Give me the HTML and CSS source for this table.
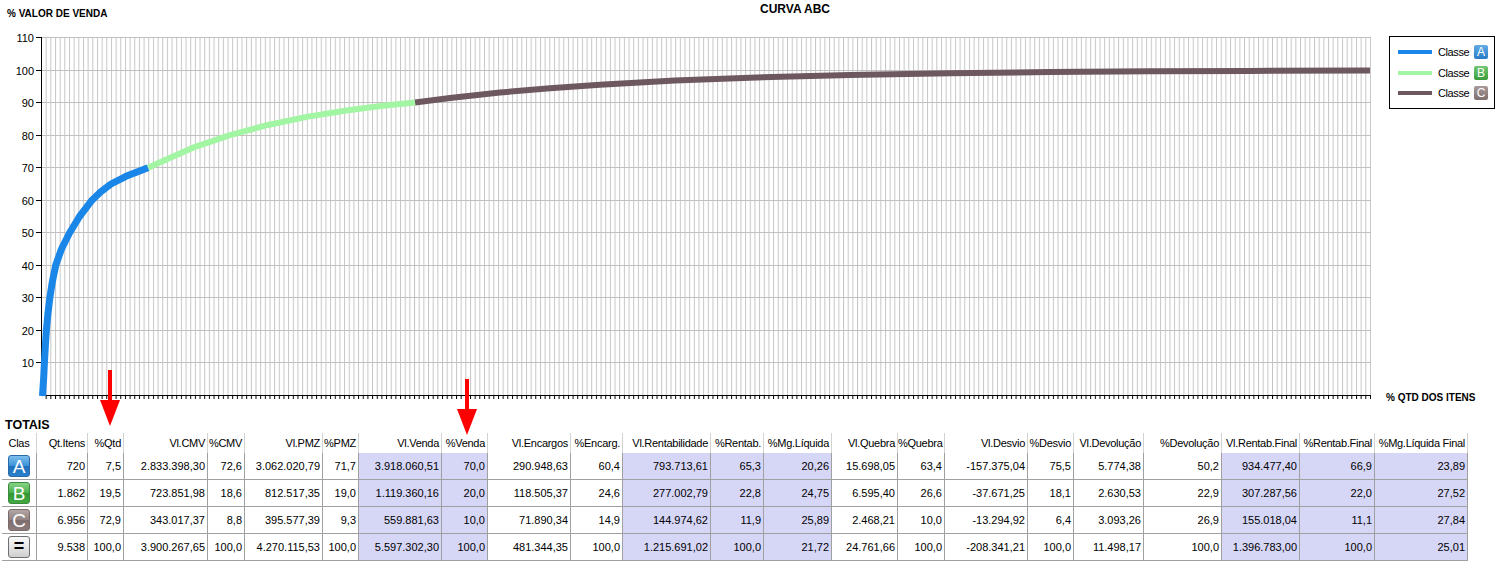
FILE: index.html
```html
<!DOCTYPE html>
<html lang="pt-BR">
<head>
<meta charset="utf-8">
<title>Curva ABC</title>
<link rel="stylesheet" href="styles.css">
</head>
<body>
<div class="page">
  <div class="chart">
    <svg class="plot" width="1505" height="418" viewBox="0 0 1505 418">
      <defs>
        <pattern id="vgrid" patternUnits="userSpaceOnUse" x="41" y="0" width="4.663" height="420">
          <rect x="0" y="0" width="1" height="420" class="grid-v"/>
        </pattern>
        <pattern id="vtick" patternUnits="userSpaceOnUse" x="41" y="0" width="4.663" height="420">
          <rect x="0" y="0" width="1" height="420" class="tick-v"/>
        </pattern>
      </defs>
      <text class="chart-title" x="795" y="12.5" text-anchor="middle">CURVA ABC</text>
      <text class="axis-title" x="7" y="17.3">% VALOR DE VENDA</text>
      <text class="axis-title" x="1386" y="401">% QTD DOS ITENS</text>

      <rect x="42" y="37" width="1329" height="358" fill="url(#vgrid)"/>
      <path class="grid-h" d="M41 37.5H1371M41 70.5H1371M41 102.5H1371M41 135.5H1371M41 167.5H1371M41 200.5H1371M41 232.5H1371M41 265.5H1371M41 297.5H1371M41 330.5H1371M41 362.5H1371"/>

      <g class="axis-label">
        <text x="34" y="41.5" text-anchor="end">110</text>
        <text x="34" y="74.5" text-anchor="end">100</text>
        <text x="34" y="106.5" text-anchor="end">90</text>
        <text x="34" y="139.5" text-anchor="end">80</text>
        <text x="34" y="171.5" text-anchor="end">70</text>
        <text x="34" y="204.5" text-anchor="end">60</text>
        <text x="34" y="236.5" text-anchor="end">50</text>
        <text x="34" y="269.5" text-anchor="end">40</text>
        <text x="34" y="301.5" text-anchor="end">30</text>
        <text x="34" y="334.5" text-anchor="end">20</text>
        <text x="34" y="366.5" text-anchor="end">10</text>
      </g>

      <path class="axis" d="M41.5 37V396M41 395.5H1371M36 37.5H41M36 70.5H41M36 102.5H41M36 135.5H41M36 167.5H41M36 200.5H41M36 232.5H41M36 265.5H41M36 297.5H41M36 330.5H41M36 362.5H41"/>
      <rect x="42" y="396" width="1329" height="3" fill="url(#vtick)"/>

      <polyline class="curve curve-c" points="415,102.55 450,97.99 500,92.56 550,88.2 600,84.65 675,80.61 750,77.68 850,74.98 950,73.25 1050,72.11 1150,71.37 1250,70.88 1370,70.4"/>
      <polyline class="curve curve-b" points="148,167.65 168,158.8 193,147.67 230,135.1 268,124.94 308,116.64 348,110.21 383,105.79 415,102.55"/>
      <polyline class="curve curve-a" points="42.5,396 43,388 43.6,379 44.4,363 45.3,347 46.4,330 47.9,314 49.8,298 52.3,282 55.8,265 61.5,249 69.5,233 79.5,216.5 92,200.2 100.5,192 111,184 126,176.3 148,167.65"/>
    </svg>

    <div class="legend">
      <div class="legend-row"><span class="swatch swatch-a"></span><span class="legend-label">Classe</span><span class="badge-sm badge-a">A</span></div>
      <div class="legend-row"><span class="swatch swatch-b"></span><span class="legend-label">Classe</span><span class="badge-sm badge-b">B</span></div>
      <div class="legend-row"><span class="swatch swatch-c"></span><span class="legend-label">Classe</span><span class="badge-sm badge-c">C</span></div>
    </div>
  </div>

  <div class="totals">
    <div class="totals-title">TOTAIS</div>
    <div class="abc-table">
      <div class="th th-cls">Clas</div>
      <div class="th">Qt.Itens</div>
      <div class="th">%Qtd</div>
      <div class="th">Vl.CMV</div>
      <div class="th">%CMV</div>
      <div class="th">Vl.PMZ</div>
      <div class="th">%PMZ</div>
      <div class="th">Vl.Venda</div>
      <div class="th">%Venda</div>
      <div class="th">Vl.Encargos</div>
      <div class="th">%Encarg.</div>
      <div class="th">Vl.Rentabilidade</div>
      <div class="th">%Rentab.</div>
      <div class="th">%Mg.Líquida</div>
      <div class="th">Vl.Quebra</div>
      <div class="th">%Quebra</div>
      <div class="th">Vl.Desvio</div>
      <div class="th">%Desvio</div>
      <div class="th">Vl.Devolução</div>
      <div class="th">%Devolução</div>
      <div class="th">Vl.Rentab.Final</div>
      <div class="th">%Rentab.Final</div>
      <div class="th">%Mg.Líquida Final</div>

      <div class="td cls"><span class="badge badge-a">A</span></div>
      <div class="td">720</div>
      <div class="td">7,5</div>
      <div class="td">2.833.398,30</div>
      <div class="td">72,6</div>
      <div class="td">3.062.020,79</div>
      <div class="td">71,7</div>
      <div class="td hl">3.918.060,51</div>
      <div class="td hl">70,0</div>
      <div class="td">290.948,63</div>
      <div class="td">60,4</div>
      <div class="td hl">793.713,61</div>
      <div class="td hl">65,3</div>
      <div class="td hl">20,26</div>
      <div class="td">15.698,05</div>
      <div class="td">63,4</div>
      <div class="td">-157.375,04</div>
      <div class="td">75,5</div>
      <div class="td">5.774,38</div>
      <div class="td">50,2</div>
      <div class="td hl">934.477,40</div>
      <div class="td hl">66,9</div>
      <div class="td hl">23,89</div>

      <div class="td cls"><span class="badge badge-b">B</span></div>
      <div class="td">1.862</div>
      <div class="td">19,5</div>
      <div class="td">723.851,98</div>
      <div class="td">18,6</div>
      <div class="td">812.517,35</div>
      <div class="td">19,0</div>
      <div class="td hl">1.119.360,16</div>
      <div class="td hl">20,0</div>
      <div class="td">118.505,37</div>
      <div class="td">24,6</div>
      <div class="td hl">277.002,79</div>
      <div class="td hl">22,8</div>
      <div class="td hl">24,75</div>
      <div class="td">6.595,40</div>
      <div class="td">26,6</div>
      <div class="td">-37.671,25</div>
      <div class="td">18,1</div>
      <div class="td">2.630,53</div>
      <div class="td">22,9</div>
      <div class="td hl">307.287,56</div>
      <div class="td hl">22,0</div>
      <div class="td hl">27,52</div>

      <div class="td cls"><span class="badge badge-c">C</span></div>
      <div class="td">6.956</div>
      <div class="td">72,9</div>
      <div class="td">343.017,37</div>
      <div class="td">8,8</div>
      <div class="td">395.577,39</div>
      <div class="td">9,3</div>
      <div class="td hl">559.881,63</div>
      <div class="td hl">10,0</div>
      <div class="td">71.890,34</div>
      <div class="td">14,9</div>
      <div class="td hl">144.974,62</div>
      <div class="td hl">11,9</div>
      <div class="td hl">25,89</div>
      <div class="td">2.468,21</div>
      <div class="td">10,0</div>
      <div class="td">-13.294,92</div>
      <div class="td">6,4</div>
      <div class="td">3.093,26</div>
      <div class="td">26,9</div>
      <div class="td hl">155.018,04</div>
      <div class="td hl">11,1</div>
      <div class="td hl">27,84</div>

      <div class="td cls"><span class="badge badge-total">=</span></div>
      <div class="td">9.538</div>
      <div class="td">100,0</div>
      <div class="td">3.900.267,65</div>
      <div class="td">100,0</div>
      <div class="td">4.270.115,53</div>
      <div class="td">100,0</div>
      <div class="td hl">5.597.302,30</div>
      <div class="td hl">100,0</div>
      <div class="td">481.344,35</div>
      <div class="td">100,0</div>
      <div class="td hl">1.215.691,02</div>
      <div class="td hl">100,0</div>
      <div class="td hl">21,72</div>
      <div class="td">24.761,66</div>
      <div class="td">100,0</div>
      <div class="td">-208.341,21</div>
      <div class="td">100,0</div>
      <div class="td">11.498,17</div>
      <div class="td">100,0</div>
      <div class="td hl">1.396.783,00</div>
      <div class="td hl">100,0</div>
      <div class="td hl">25,01</div>
    </div>
  </div>

  <svg class="arrow arrow-qtd" width="22" height="58" viewBox="0 0 22 58">
    <rect x="9" y="0" width="4" height="31" class="arrow-fill"/>
    <polygon points="1,30 21,30 11,56" class="arrow-fill"/>
  </svg>
  <svg class="arrow arrow-venda" width="22" height="58" viewBox="0 0 22 58">
    <rect x="9" y="0" width="4" height="31" class="arrow-fill"/>
    <polygon points="1,30 21,30 11,56" class="arrow-fill"/>
  </svg>
</div>
</body>
</html>
```

FILE: styles.css
```css
html, body {
  margin: 0;
  padding: 0;
  background: #ffffff;
}

body {
  font-family: "Liberation Sans", Arial, sans-serif;
  color: #000000;
}

.page {
  position: relative;
  width: 1505px;
  height: 571px;
  overflow: hidden;
}

/* ---------- chart ---------- */
.chart {
  position: relative;
  height: 418px;
}

.plot {
  display: block;
}

.chart-title {
  font-family: "Liberation Sans", Arial, sans-serif;
  font-size: 12px;
  font-weight: bold;
  fill: #000000;
}

.axis-title {
  font-family: "Liberation Sans", Arial, sans-serif;
  font-size: 10px;
  font-weight: bold;
  fill: #000000;
}

.axis-label {
  font-family: "Liberation Sans", Arial, sans-serif;
  font-size: 11px;
  fill: #000000;
}

.grid-v {
  fill: #c6c6c6;
}

.tick-v {
  fill: #000000;
}

.grid-h {
  stroke: #c0c0c0;
  stroke-width: 1;
  fill: none;
}

.axis {
  stroke: #000000;
  stroke-width: 1;
  fill: none;
}

.curve {
  fill: none;
  stroke-linejoin: round;
  stroke-linecap: butt;
}

.curve-a {
  stroke: #1a86e8;
  stroke-width: 7;
}

.curve-b {
  stroke: #a2f5a2;
  stroke-width: 6;
}

.curve-c {
  stroke: #6e5860;
  stroke-width: 6;
}

/* ---------- legend ---------- */
.legend {
  position: absolute;
  left: 1389px;
  top: 36px;
  width: 106px;
  height: 73px;
  box-sizing: border-box;
  border: 1px solid #000000;
  background: #ffffff;
  padding: 5px 0 0 8px;
  display: flex;
  flex-direction: column;
}

.legend-row {
  display: flex;
  align-items: center;
  height: 20.5px;
}

.swatch {
  width: 34px;
  height: 4px;
  margin-right: 6px;
}

.swatch-a { background: #1a86e8; }
.swatch-b { background: #a2f5a2; }
.swatch-c { background: #6e5860; }

.legend-label {
  width: 36px;
  font-size: 11px;
  letter-spacing: -0.4px;
  line-height: 14px;
}

.badge-sm {
  width: 14px;
  height: 14px;
  box-sizing: border-box;
  border-radius: 2px;
  color: #ffffff;
  font-size: 12px;
  line-height: 14px;
  text-align: center;
}

/* ---------- badges ---------- */
.badge-a { background: linear-gradient(#62ade6, #2a7bc6); }
.badge-b { background: linear-gradient(#74c874, #3a9c3a); }
.badge-c { background: linear-gradient(#a89a9a, #807070); }

.badge {
  display: block;
  width: 22px;
  height: 22px;
  box-sizing: border-box;
  border-radius: 3px;
  color: #ffffff;
  font-size: 19px;
  line-height: 21px;
  text-align: center;
}

.badge.badge-a {
  background: linear-gradient(#7cc0ee 0%, #3d92d8 48%, #1f70bd 52%, #2a80cc 100%);
  border: 1px solid #2a6aa6;
}

.badge.badge-b {
  background: linear-gradient(#86d486 0%, #4cb04c 48%, #339a33 52%, #42a842 100%);
  border: 1px solid #3a8a3a;
}

.badge.badge-c {
  background: linear-gradient(#b2a6a6 0%, #938383 48%, #7e6e6e 52%, #8a7a7a 100%);
  border: 1px solid #7a6a6a;
}

.badge.badge-total {
  background: linear-gradient(#fafafa 0%, #e6e6e6 50%, #cfcfcf 100%);
  border: 1px solid #6e6e6e;
  color: #000000;
  font-weight: bold;
  font-size: 18px;
  line-height: 19px;
}

/* ---------- totals table ---------- */
.totals {
  padding-left: 2px;
}

.totals-title {
  height: 15px;
  line-height: 15px;
  padding-left: 3px;
  font-size: 12.5px;
  font-weight: bold;
}

.abc-table {
  display: grid;
  grid-template-columns: 35px 51px 36px 84px 37px 78px 36px 83px 46px 83px 52px 88px 53px 68px 66px 47px 83px 46px 70px 78px 78px 75px 93px;
  width: 1466px;
  font-size: 11px;
}

.th {
  height: 20px;
  line-height: 20px;
  box-sizing: border-box;
  border-right: 1px solid #d2d2d2;
  padding-right: 2px;
  text-align: right;
  white-space: nowrap;
  overflow: hidden;
  letter-spacing: -0.28px;
}

.th-cls {
  text-align: center;
  padding-right: 0;
}

.td {
  height: 27px;
  box-sizing: border-box;
  border-right: 1px solid #a0a0a0;
  border-bottom: 1px solid #a0a0a0;
  padding-right: 2px;
  display: flex;
  align-items: center;
  justify-content: flex-end;
  white-space: nowrap;
}

.td.hl {
  background: #d6d6f7;
}

.td.cls {
  justify-content: center;
  padding-right: 0;
}

/* ---------- annotation arrows ---------- */
.arrow {
  position: absolute;
  display: block;
}

.arrow-fill {
  fill: #ff0000;
}

.arrow-qtd {
  left: 99px;
  top: 370px;
}

.arrow-venda {
  left: 456px;
  top: 379px;
}
```
